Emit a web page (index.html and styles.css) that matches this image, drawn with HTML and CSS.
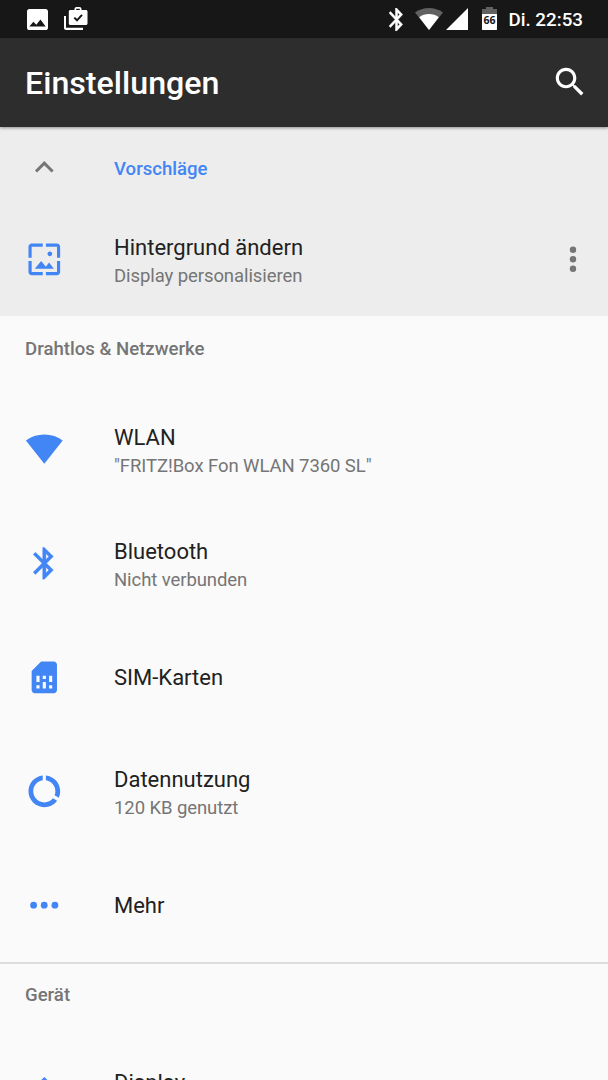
FILE: index.html
```
<!DOCTYPE html>
<html lang="de">
<head>
<meta charset="utf-8">
<title>Einstellungen</title>
<link rel="stylesheet" href="styles.css">
</head>
<body>
<div class="screen">
  <div class="statusbar">
    <div class="notifications">
      <svg class="s-photo" width="21" height="21" viewBox="3 3 18 18"><path d="M21 19V5c0-1.100-.9-2-2-2H5c-1.100 0-2 .9-2 2v14c0 1.100.9 2 2 2h14c1.100 0 2-.9 2-2zM8.500 14l2.500 2.500L14.500 12l4.500 6H5l3.500-4z"/></svg>
      <svg class="s-shop" width="24" height="23" viewBox="0 0 24 23"><path fill-rule="evenodd" d="M2 9H0v12c0 1.100.9 2 2 2h17v-2.200H2zM10.500 3V2c0-1.100.9-2 2-2h3c1.100 0 2 .9 2 2v1H22c.8 0 1.500.7 1.500 1.500v12c0 .8-.7 1.500-1.500 1.500H6.300c-.8 0-1.500-.7-1.500-1.500v-12C4.800 3.700 5.500 3 6.300 3zM12.200 1.700V3h3.600V1.700z"/><path class="tick" d="M10.300 10.600l2.700 2.700 5-5.500"/></svg>
    </div>
    <div class="system">
      <svg class="s-bt" width="14" height="23" viewBox="5 2 13 20" preserveAspectRatio="none"><path stroke="#fff" stroke-width=".4" d="M17.710 7.710L12 2h-1v7.590L6.410 5 5 6.410 10.590 12 5 17.590 6.410 19 11 14.410V22h1l5.710-5.710-4.300-4.290zM13 5.830l1.880 1.880L13 9.590zm1.880 10.460L13 18.170v-3.760z"/></svg>
      <svg class="s-wifi" width="28" height="22" viewBox="0 0 28 22"><path class="dim" d="M14 22L0 4.500C4 1.500 8.800 0 14 0s10 1.500 14 4.500z"/><path d="M14 22L4.200 9.300C7 7.100 10.300 6 14 6s7 1.100 9.800 3.300z"/></svg>
      <svg class="s-cell" width="22" height="22" viewBox="0 0 22 22"><path d="M22 0v22H0z"/></svg>
      <svg class="s-batt" width="15" height="23" viewBox="0 0 15 23"><path class="dim" d="M4 0h7v2h4v5H0V2h4z"/><path d="M0 7h15v15.500c0 .3-.2.500-.5.500h-14C.2 23 0 22.800 0 22.500z"/><text x="7.500" y="17">66</text></svg>
      <span class="clock">Di. 22:53</span>
    </div>
  </div>

  <header class="appbar">
    <h1>Einstellungen</h1>
    <svg class="search" width="38" height="38" viewBox="0 0 24 24"><path d="M15.500 14h-.79l-.28-.27C15.410 12.590 16 11.110 16 9.500 16 5.910 13.090 3 9.500 3S3 5.910 3 9.500 5.910 16 9.500 16c1.610 0 3.090-.59 4.230-1.570l.27.28v.79l5 4.990L20.490 19l-4.990-5zm-6 0C7.010 14 5 11.990 5 9.500S7.010 5 9.500 5 14 7.010 14 9.500 11.990 14 9.500 14z"/></svg>
  </header>

  <section class="suggestions">
    <div class="suggest-head">
      <svg class="icon" viewBox="0 0 38 38"><path class="chevron" d="M11 22.500l8.300-8.300 8.300 8.300"/></svg>
      <span>Vorschläge</span>
    </div>
    <div class="row">
      <svg class="icon" viewBox="-.2 -.2 24 24"><path d="M4 4h7V2H4c-1.100 0-2 .9-2 2v7h2V4zm6 9l-4 5h12l-3-4-2.030 2.710L10 13zm7-4.500c0-.83-.67-1.500-1.500-1.500S14 7.670 14 8.500s.67 1.500 1.500 1.500S17 9.330 17 8.500zM20 2h-7v2h7v7h2V4c0-1.100-.9-2-2-2zm0 18h-7v2h7c1.100 0 2-.9 2-2v-7h-2v7zM4 13H2v7c0 1.100.9 2 2 2h7v-2H4v-7z"/></svg>
      <div class="label"><div class="title">Hintergrund ändern</div><div class="sub">Display personalisieren</div></div>
      <svg class="overflow" width="8" height="26" viewBox="0 0 8 26"><circle cx="4" cy="3.700" r="3.200"/><circle cx="4" cy="13.200" r="3.200"/><circle cx="4" cy="22.700" r="3.200"/></svg>
    </div>
  </section>

  <section class="group">
    <h2>Drahtlos &amp; Netzwerke</h2>
    <div class="row">
      <svg class="icon" viewBox="-.3 -.3 38 38"><path d="M19 33.500L.6 10.200C5.500 6.200 12 4.200 19 4.200s13.500 2 18.400 6z"/></svg>
      <div class="label"><div class="title">WLAN</div><div class="sub">"FRITZ!Box Fon WLAN 7360 SL"</div></div>
    </div>
    <div class="row">
      <svg class="icon" viewBox="-.2 -.2 24 24"><path stroke="#4285f4" stroke-width=".25" d="M17.710 7.710L12 2h-1v7.590L6.410 5 5 6.410 10.590 12 5 17.590 6.410 19 11 14.410V22h1l5.710-5.710-4.300-4.290zM13 5.830l1.880 1.880L13 9.590zm1.880 10.460L13 18.170v-3.760z"/></svg>
      <div class="label"><div class="title">Bluetooth</div><div class="sub">Nicht verbunden</div></div>
    </div>
    <div class="row single">
      <svg class="icon" viewBox="-.2 -.2 24 24"><path d="M19.990 4c0-1.100-.89-2-1.990-2h-8L4 8v12c0 1.100.9 2 2 2h12.010c1.100 0 1.990-.9 1.990-2l-.01-16zM9 19H7v-2h2v2zm8 0h-2v-2h2v2zm-8-4H7v-4h2v4zm4 4h-2v-4h2v4zm0-6h-2v-2h2v2zm4 2h-2v-4h2v4z"/></svg>
      <div class="label"><div class="title">SIM-Karten</div></div>
    </div>
    <div class="row">
      <svg class="icon" viewBox="-.2 -.2 24 24"><path d="M13 2.050v3.030c3.390.49 6 3.390 6 6.920 0 .9-.18 1.750-.48 2.540l2.600 1.530c.56-1.240.88-2.620.88-4.070 0-5.180-3.950-9.450-9-9.950zM12 19c-3.870 0-7-3.130-7-7 0-3.530 2.610-6.430 6-6.920V2.050c-5.060.5-9 4.760-9 9.950 0 5.520 4.470 10 9.990 10 3.310 0 6.240-1.610 8.060-4.090l-2.600-1.530C16.170 17.980 14.210 19 12 19z"/></svg>
      <div class="label"><div class="title">Datennutzung</div><div class="sub">120 KB genutzt</div></div>
    </div>
    <div class="row single">
      <svg class="icon" viewBox="0 0 38 38"><circle cx="8.600" cy="19.200" r="3.400"/><circle cx="19.200" cy="19.200" r="3.400"/><circle cx="29.900" cy="19.200" r="3.400"/></svg>
      <div class="label"><div class="title">Mehr</div></div>
    </div>
  </section>

  <section class="group ruled">
    <h2>Gerät</h2>
    <div class="row">
      <svg class="icon" viewBox="-.2 -.5 24 24"><path d="M20 8.690V4h-4.690L12 .69 8.690 4H4v4.690L.69 12 4 15.310V20h4.690L12 23.310 15.310 20H20v-4.690L23.310 12z"/></svg>
      <div class="label"><div class="title">Display</div><div class="sub">&nbsp;</div></div>
    </div>
  </section>
</div>
</body>
</html>
```
FILE: styles.css
```
* { box-sizing: border-box; }
body { margin: 0; background: #fafafa; font-family: Roboto, sans-serif; }
svg { display: block; flex: none; }
h1, h2 { margin: 0; font-weight: 500; }

.screen { width: 608px; height: 1080px; overflow: hidden; background: #fafafa; }

.statusbar {
  display: flex; justify-content: space-between;
  height: 38px; padding: 0 25px 0 27px;
  background: #171717; color: #fff; fill: #fff;
}
.notifications, .system { display: flex; align-items: center; }
.s-shop { margin: -1px 0 0 16px; }
.tick { fill: none; stroke: #171717; stroke-width: 2; }
.dim { fill: #616161; }
.s-bt { margin-top: 1px; }
.s-wifi { margin-left: 12px; }
.s-cell { margin-left: 3px; }
.s-batt { margin-left: 14px; margin-top: -1px; }
.s-batt text { fill: #171717; font-family: "Open Sans", sans-serif; font-size: 10.5px; font-weight: 700; text-anchor: middle; }
.clock { margin-left: 11px; padding-top: 2px; font-size: 18.8px; font-weight: 500; line-height: 36px; white-space: nowrap; }

.appbar {
  position: relative; display: flex; align-items: center; justify-content: space-between;
  height: 89px; padding: 0 19px 0 25px;
  background: #2d2d2d; color: #fff; fill: #fff;
  box-shadow: 0 1px 3px rgba(0, 0, 0, .4);
}
.appbar h1 { font-size: 32.2px; line-height: 38px; }
.search { margin-bottom: 2px; }

.suggestions { height: 189px; background: #ededed; }
.suggest-head {
  display: flex; align-items: center; gap: 51px;
  height: 75px; padding: 9px 25px 0;
  color: #4285f4; font-size: 18.6px; font-weight: 500;
}
.suggest-head .icon { margin-top: -2px; }
.chevron { fill: none; stroke: #757575; stroke-width: 3; }

.row { display: flex; align-items: center; gap: 51px; height: 114px; padding: 0 31px 0 25px; }
.icon { width: 38px; height: 38px; fill: #4285f4; }
.label { flex: 1; padding-top: 3px; }
.single .label { padding-top: 1px; }
.title { color: #212121; font-size: 22px; line-height: 30px; }
.sub { color: #757575; font-size: 18.5px; line-height: 26px; letter-spacing: -.08px; }
.overflow { fill: #757575; }

.group h2 { height: 76px; padding: 21px 25px 0; color: #757575; font-size: 18.6px; line-height: 24px; }
.ruled { border-top: 2px solid #dcdcdc; }
.ruled h2 { height: 73px; padding-top: 19px; }
```
